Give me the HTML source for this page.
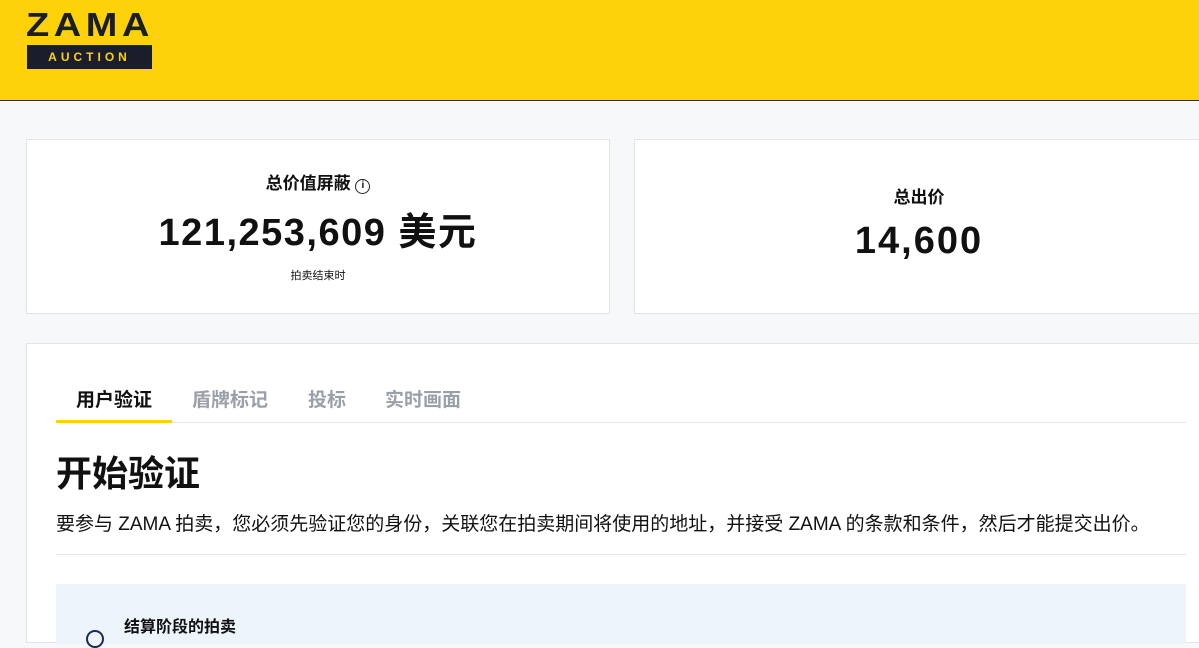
<!DOCTYPE html>
<html><head><meta charset="utf-8"><style>
*{margin:0;padding:0;box-sizing:border-box}
body{width:1199px;height:635px;overflow:hidden;background:#f7f8fa;font-family:"Liberation Sans","Noto Sans CJK SC",sans-serif;color:#111;position:relative}
.hdr{position:absolute;left:0;top:0;width:1199px;height:101px;background:#fdd209;border-bottom:1px solid #333}
.logo{position:absolute;left:26px;top:8px;font-weight:700;font-size:33px;letter-spacing:4px;color:#1a1e2c;line-height:34px;transform:scaleX(1.15);transform-origin:left}
.auc{position:absolute;left:27px;top:45px;width:125px;height:24px;background:#1a1e2c;color:#fdd209;font-size:12px;font-weight:700;letter-spacing:4px;text-align:center;line-height:24px}
.card{position:absolute;background:#fff;border:1px solid #e2e4e8}
.c{text-align:center;position:absolute;left:0;width:100%}
.tab{position:absolute;top:385px;font-size:19px;font-weight:700;color:#9aa0aa}
</style></head><body>
<div class="hdr"><div class="logo">ZAMA</div><div class="auc">AUCTION</div></div>
<div class="card" style="left:26px;top:139px;width:584px;height:175px">
<div class="c" style="top:29px;font-size:17px;font-weight:700">总价值屏蔽 <span style="display:inline-block;width:15px;height:15px;border:1.5px solid #222;border-radius:50%;font-size:10px;line-height:12px;vertical-align:1px">i</span></div>
<div class="c" style="top:61px;font-size:38px;font-weight:700;letter-spacing:1.5px">121,253,609 美元</div>
<div class="c" style="top:127px;font-size:11px">拍卖结束时</div>
</div>
<div class="card" style="left:634px;top:139px;width:570px;height:175px">
<div class="c" style="top:43px;font-size:17px;font-weight:700">总出价</div>
<div class="c" style="top:80px;font-size:38px;font-weight:700;letter-spacing:2px">14,600</div>
</div>
<div class="card" style="left:26px;top:343px;width:1180px;height:300px"></div>
<div class="tab" style="left:76px;color:#111">用户验证</div>
<div class="tab" style="left:192px">盾牌标记</div>
<div class="tab" style="left:308px">投标</div>
<div class="tab" style="left:385px">实时画面</div>
<div style="position:absolute;left:56px;top:422px;width:1130px;height:1px;background:#e5e7eb"></div>
<div style="position:absolute;left:56px;top:420px;width:116px;height:3px;background:#fdd209"></div>
<div style="position:absolute;left:56px;top:445px;font-size:36px;font-weight:700">开始验证</div>
<div style="position:absolute;left:56px;top:509px;font-size:19px;white-space:nowrap">要参与 ZAMA 拍卖，您必须先验证您的身份，关联您在拍卖期间将使用的地址，并接受 ZAMA 的条款和条件，然后才能提交出价。</div>
<div style="position:absolute;left:56px;top:554px;width:1130px;height:1px;background:#e5e7eb"></div>
<div style="position:absolute;left:56px;top:584px;width:1130px;height:60px;background:#eef4fc"></div>
<div style="position:absolute;left:124px;top:613px;font-size:16px;font-weight:700">结算阶段的拍卖</div>
<div style="position:absolute;left:86px;top:630px;width:18px;height:18px;border:2px solid #1a2a5a;border-radius:50%"></div>
</body></html>
